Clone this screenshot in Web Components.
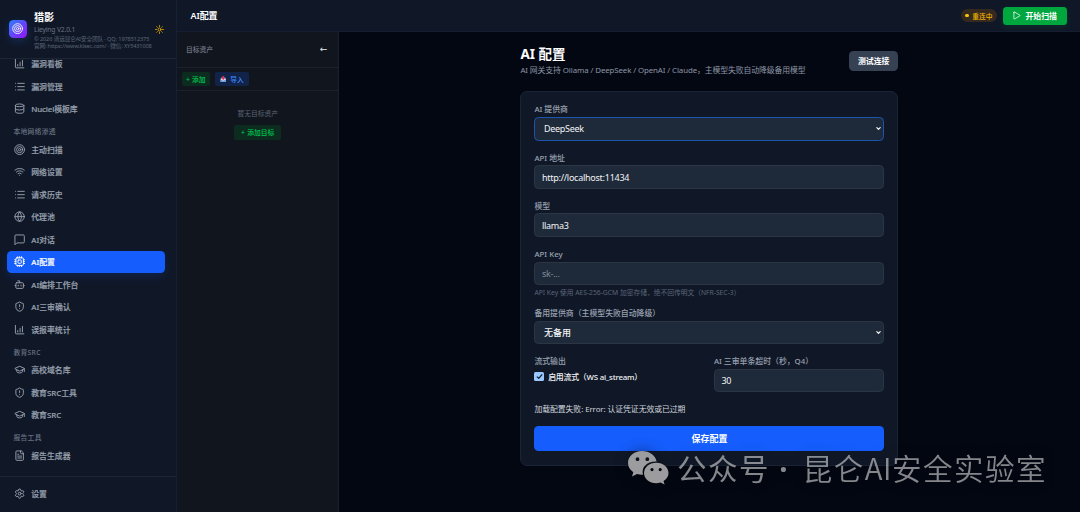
<!DOCTYPE html>
<html lang="zh-CN">
<head>
<meta charset="utf-8">
<title>猎影 - AI配置</title>
<style>
    html, body {
        margin: 0;
        height: 100%;
        overflow: hidden;
        background: #030712;
    }
    body {
        font-family: "Noto Sans", "Noto Sans CJK SC", sans-serif;
        font-size: 7.875px;
        color: #f3f4f6;
    }
</style>
</head>
<body>
<scan-app></scan-app>

<script>
const ICONS = {
    chart: '<path d="M3 3v16a2 2 0 0 0 2 2h16"/><path d="M8 17v-3M13 17V9M18 17V5"/>',
    list: '<path d="M3 5h.01M3 12h.01M3 19h.01M8 5h14M8 12h14M8 19h14"/>',
    database: '<ellipse cx="12" cy="5" rx="9" ry="3"/><path d="M3 5v14a9 3 0 0 0 18 0V5"/><path d="M3 12a9 3 0 0 0 18 0"/>',
    target: '<circle cx="12" cy="12" r="10.5"/><circle cx="12" cy="12" r="6.5"/><circle cx="12" cy="12" r="2.5"/>',
    wifi: '<path d="M12 20h.01M2 8.8a15 15 0 0 1 20 0M5 12.9a10 10 0 0 1 14 0M8.500 16.400a5 5 0 0 1 7 0"/>',
    globe: '<circle cx="12" cy="12" r="10"/><path d="M12 2a14.500 14.500 0 0 0 0 20 14.500 14.500 0 0 0 0-20M2 12h20"/>',
    chat: '<path d="M22 17a2 2 0 0 1-2 2H6l-4 4V4a2 2 0 0 1 2-2h16a2 2 0 0 1 2 2z"/>',
    cpu: '<rect x="4" y="4" width="16" height="16" rx="2"/><rect x="8.500" y="8.500" width="7" height="7" rx="1"/><path d="M8 1.500V4M12 1.500V4M16 1.500V4M8 20v2.500M12 20v2.500M16 20v2.500M1.500 8H4M1.500 12H4M1.500 16H4M20 8h2.500M20 12h2.500M20 16h2.500"/>',
    bot: '<path d="M12 8V4H8"/><rect x="4" y="8" width="16" height="12" rx="2"/><path d="M2 14h2M20 14h2M15 13v2M9 13v2"/>',
    shield: '<path d="M20 13c0 5-3.500 7.500-7.660 8.950a1 1 0 0 1-.67-.01C7.500 20.500 4 18 4 13V6a1 1 0 0 1 1-1c2 0 4.500-1.200 6.240-2.720a1.170 1.170 0 0 1 1.520 0C14.510 3.810 17 5 19 5a1 1 0 0 1 1 1z"/><path d="M12 8v4M12 16h.01"/>',
    school: '<path d="M21.420 10.920a1 1 0 0 0-.02-1.840L12.830 5.180a2 2 0 0 0-1.660 0l-8.570 3.900a1 1 0 0 0 0 1.830l8.570 3.910a2 2 0 0 0 1.660 0zM22 10v6"/><path d="M6 12.500V16a6 3 0 0 0 12 0v-3.500"/>',
    file: '<path d="M15 2H6a2 2 0 0 0-2 2v16a2 2 0 0 0 2 2h12a2 2 0 0 0 2-2V7z"/><path d="M14 2v4a2 2 0 0 0 2 2h4M10 9H8M16 13H8M16 17H8"/>',
    gear: '<path d="M9.670 4.140a2.340 2.340 0 0 1 4.660 0 2.340 2.340 0 0 0 3.320 1.910 2.340 2.340 0 0 1 2.330 4.030 2.340 2.340 0 0 0 0 3.840 2.340 2.340 0 0 1-2.330 4.030 2.340 2.340 0 0 0-3.320 1.910 2.340 2.340 0 0 1-4.660 0 2.340 2.340 0 0 0-3.320-1.910 2.340 2.340 0 0 1-2.330-4.030 2.340 2.340 0 0 0 0-3.840 2.340 2.340 0 0 1 2.330-4.030 2.340 2.340 0 0 0 3.320-1.910"/><circle cx="12" cy="12" r="3"/>',
    sun: '<circle cx="12" cy="12" r="4"/><path d="M12 1.500v2.500M12 20v2.500M4.600 4.600l1.700 1.700M17.700 17.700l1.700 1.700M1.500 12H4M20 12h2.500M6.300 17.700l-1.700 1.700M19.400 4.600l-1.700 1.700"/>',
    play: '<path d="M5 3.500v17a1 1 0 0 0 1.500.9l14.500-8.500a1 1 0 0 0 0-1.700L6.500 2.600A1 1 0 0 0 5 3.500z"/>',
    down: '<path d="M4 8l8 8 8-8"/>',
    check: '<path d="M4 13l5.500 5.500L20 6"/>',
    inbox: '<g stroke="none"><path d="M2 9h20v13H2z" fill="#a9c7ea"/><path d="M5 6h14v8H5z" fill="#e8eef7"/><path d="M2 16h6l2 2h4l2-2h6v6H2z" fill="#6f9bd1"/><path d="M9 0h6v7h4.500L12 15 4.500 7H9z" fill="#dc2f52"/></g>'
};

class ScanIcon extends HTMLElement {
    constructor() {
        super();
        this.attachShadow({ mode: 'open' });
    }

    connectedCallback() {
        const name = this.getAttribute('name');
        this.shadowRoot.innerHTML = `
        <style>
            :host { display: block; flex: none; width: 11.25px; height: 11.25px; }
            svg { display: block; width: 100%; height: 100%; overflow: visible; }
        </style>
        <svg viewBox="0 0 24 24" fill="none" stroke="currentColor" stroke-linecap="round" stroke-linejoin="round"
            stroke-width="${this.getAttribute('stroke') || 2}">${ICONS[name]}</svg>`;
    }
}
customElements.define('scan-icon', ScanIcon);

class NavItem extends HTMLElement {
    constructor() {
        super();
        this.attachShadow({ mode: 'open' });
    }

    connectedCallback() {
        this.shadowRoot.innerHTML = `
        <style>
            :host {
                display: flex;
                align-items: center;
                gap: 6.4px;
                box-sizing: border-box;
                height: 22.5px;
                padding: 0 6.6px;
                border-radius: 4.5px;
                color: #99a1af;
                font-weight: 500;
                white-space: nowrap;
                -webkit-text-stroke: .15px;
            }
            :host([tight]) { letter-spacing: -.12px; }
            :host([active]) {
                background: #155dfc;
                color: #fff;
                box-shadow: 0 4px 8px rgba(21, 93, 252, .14);
            }
        </style>
        <scan-icon name="${this.getAttribute('icon')}"></scan-icon>
        <span><slot></slot></span>`;
    }
}
customElements.define('nav-item', NavItem);

class NavSection extends HTMLElement {
    constructor() {
        super();
        this.attachShadow({ mode: 'open' }).innerHTML = `
        <style>
            :host {
                display: block;
                box-sizing: border-box;
                height: 18px;
                padding: 6px 6.4px 0;
                font-size: 6.75px;
                line-height: 11px;
                letter-spacing: .34px;
                font-weight: 500;
                color: #6a7282;
            }
        </style>
        <slot></slot>`;
    }
}
customElements.define('nav-section', NavSection);

class AppSidebar extends HTMLElement {
    constructor() {
        super();
        this.attachShadow({ mode: 'open' }).innerHTML = `
        <style>
            :host {
                display: flex;
                flex-direction: column;
                box-sizing: border-box;
                height: 100%;
                background: #101828;
                border-right: 1px solid #162032;
            }
            header {
                display: flex;
                align-items: center;
                box-sizing: border-box;
                flex: none;
                height: 59px;
                padding: 0 12.5px 0 9px;
                border-bottom: 1px solid #1a2536;
            }
            .logo {
                display: grid;
                place-items: center;
                flex: none;
                width: 18px;
                height: 18px;
                margin-right: 7px;
                border-radius: 4.5px;
                background: linear-gradient(135deg, #2b7fff, #9810fa);
                box-shadow: 0 3px 8px rgba(43, 127, 255, .2);
            }
            .brand { flex: 1; padding-top: 3.8px; white-space: nowrap; }
            .name { font-size: 10.1px; line-height: 13px; font-weight: 700; color: #fff; }
            .version { font-size: 6.75px; line-height: 12px; color: #6a7282; letter-spacing: -.16px; }
            .legal { font-size: 5.6px; line-height: 7.3px; letter-spacing: -.1px; color: #5c6677; }
            .legal + .legal { letter-spacing: -.13px; }
            .sun { width: 9px; height: 9px; color: #f0b100; }
            nav { flex: 1; overflow: hidden; padding: 0 11px 0 7px; }
            .list { margin-top: -6.45px; }
            footer { flex: none; height: 36.5px; box-sizing: border-box; padding: 6px 11px 0 7px; border-top: 1px solid #1a2536; }
        </style>
        <header>
            <div class="logo"><scan-icon name="target"></scan-icon></div>
            <div class="brand">
                <div class="name">猎影</div>
                <div class="version">Lieying V2.0.1</div>
                <div class="legal">© 2026 清远昆仑AI安全团队 · QQ: 1978512375</div>
                <div class="legal">官网: https://www.klsec.com/ · 微信: XY5431008</div>
            </div>
            <scan-icon class="sun" name="sun" stroke="2.2"></scan-icon>
        </header>
        <nav>
            <div class="list">
                <nav-item icon="chart">漏洞看板</nav-item>
                <nav-item icon="list">漏洞管理</nav-item>
                <nav-item icon="database" tight>Nuclei模板库</nav-item>
                <nav-section>本地网络渗透</nav-section>
                <nav-item icon="target">主动扫描</nav-item>
                <nav-item icon="wifi">网络设置</nav-item>
                <nav-item icon="list">请求历史</nav-item>
                <nav-item icon="globe">代理池</nav-item>
                <nav-item icon="chat">AI对话</nav-item>
                <nav-item icon="cpu" active>AI配置</nav-item>
                <nav-item icon="bot">AI编排工作台</nav-item>
                <nav-item icon="shield">AI三审确认</nav-item>
                <nav-item icon="chart">误报率统计</nav-item>
                <nav-section>教育SRC</nav-section>
                <nav-item icon="school">高校域名库</nav-item>
                <nav-item icon="shield">教育SRC工具</nav-item>
                <nav-item icon="school">教育SRC</nav-item>
                <nav-section>报告工具</nav-section>
                <nav-item icon="file">报告生成器</nav-item>
            </div>
        </nav>
        <footer><nav-item icon="gear">设置</nav-item></footer>`;
    }
}
customElements.define('app-sidebar', AppSidebar);

class AppTopbar extends HTMLElement {
    constructor() {
        super();
        this.attachShadow({ mode: 'open' }).innerHTML = `
        <style>
            :host {
                display: flex;
                align-items: center;
                box-sizing: border-box;
                height: 32px;
                padding: 0 13.5px;
                background: #101828;
                border-bottom: 1px solid #141e30;
                white-space: nowrap;
            }
            h1 { flex: 1; margin: 0; font-size: 9px; font-weight: 600; letter-spacing: -.12px; color: #fff; }
            .status {
                display: flex;
                align-items: center;
                gap: 3.5px;
                height: 13.5px;
                margin-right: 6px;
                padding: 0 4.5px;
                border-radius: 7px;
                background: #35291f;
                color: #f0b100;
                font-size: 6.75px;
                font-weight: 500;
            }
            .status i { width: 3.6px; height: 3.6px; border-radius: 50%; background: #fdc700; }
            .start {
                display: flex;
                align-items: center;
                gap: 4.5px;
                box-sizing: border-box;
                width: 63.500px;
                height: 18px;
                padding: 0 9px;
                border-radius: 3.5px;
                background: #00a63e;
                box-shadow: 0 2px 6px rgba(0, 166, 62, .15);
                font-size: 7.875px;
                font-weight: 600;
                color: #fff;
            }
            .start scan-icon { width: 9px; height: 9px; }
        </style>
        <h1>AI配置</h1>
        <div class="status"><i></i><span>重连中</span></div>
        <div class="start"><scan-icon name="play"></scan-icon><span>开始扫描</span></div>`;
    }
}
customElements.define('app-topbar', AppTopbar);

class TargetPanel extends HTMLElement {
    constructor() {
        super();
        this.attachShadow({ mode: 'open' }).innerHTML = `
        <style>
            :host {
                display: block;
                box-sizing: border-box;
                background: #11151d;
                border-right: 1px solid #1b212b;
                font-size: 6.75px;
                white-space: nowrap;
            }
            .head {
                display: flex;
                align-items: center;
                justify-content: space-between;
                box-sizing: border-box;
                height: 36px;
                padding: 0 11px 0 9px;
                border-bottom: 1px solid #1c222c;
                color: #737b8a;
                font-weight: 500;
            }
            .head b { font: 400 9px "DejaVu Sans", sans-serif; color: #e5e7eb; }
            .tools {
                display: flex;
                align-items: center;
                gap: 5px;
                box-sizing: border-box;
                height: 23px;
                padding: 0 4.5px;
                border-bottom: 1px solid #1c222c;
            }
            .btn {
                display: flex;
                align-items: center;
                justify-content: center;
                gap: 3.5px;
                width: 28.500px;
                height: 13.500px;
                border-radius: 2px;
                background: #0d2c20;
                color: #00c950;
                font-weight: 500;
                word-spacing: .6px;
            }
            .import { width: 34px; background: #12234a; color: #3b8cff; }
            .import scan-icon { width: 6.5px; height: 6.5px; }
            .empty { display: flex; flex-direction: column; align-items: center; padding-top: 17.3px; color: #5d6675; }
            .empty p { margin: 0 0 5.500px; line-height: 11px; }
            .add { width: 47px; height: 15.500px; }
        </style>
        <div class="head"><span>目标资产</span><b>←</b></div>
        <div class="tools">
            <div class="btn">+ 添加</div>
            <div class="btn import"><scan-icon name="inbox"></scan-icon><span>导入</span></div>
        </div>
        <div class="empty">
            <p>暂无目标资产</p>
            <div class="btn add">+ 添加目标</div>
        </div>`;
    }
}
customElements.define('target-panel', TargetPanel);

class FormField extends HTMLElement {
    constructor() {
        super();
        this.attachShadow({ mode: 'open' });
    }

    connectedCallback() {
        const hint = this.getAttribute('hint');
        const isSelect = this.hasAttribute('select');
        this.shadowRoot.innerHTML = `
        <style>
            :host { display: block; white-space: nowrap; }
            label { display: block; height: 12.8px; line-height: 10.6px; font-size: 7.875px; font-weight: 500; color: #99a1af; }
            .box {
                display: flex;
                align-items: center;
                justify-content: space-between;
                box-sizing: border-box;
                height: 23.6px;
                padding: 0 2px 0 6.5px;
                border: 1px solid #2a3644;
                border-radius: 4.5px;
                background: #1e2939;
                font-size: 9px;
                letter-spacing: -.25px;
                color: #f3f4f6;
            }
            :host([select]) .box { padding-left: 8.6px; letter-spacing: 0; font-weight: 500; }
            :host([focused]) .box { border-color: #1c55ae; letter-spacing: -.3px; font-weight: 400; }
            :host([empty]) .box { color: #808b9b; }
            .box scan-icon { width: 5px; height: 5px; }
            .hint { height: 10.8px; line-height: 15px; font-size: 6.75px; color: #5b6576; }
        </style>
        <label>${this.getAttribute('label')}</label>
        <div class="box"><span><slot></slot></span>${isSelect ? '<scan-icon name="down" stroke="6"></scan-icon>' : ''}</div>
        ${hint ? `<div class="hint">${hint}</div>` : ''}`;
    }
}
customElements.define('form-field', FormField);

class StreamToggle extends HTMLElement {
    constructor() {
        super();
        this.attachShadow({ mode: 'open' }).innerHTML = `
        <style>
            :host { display: block; white-space: nowrap; }
            .title { height: 12.8px; line-height: 10.6px; font-size: 7.875px; font-weight: 500; color: #99a1af; }
            .row { display: flex; align-items: center; gap: 4.3px; height: 16px; font-size: 7.875px; letter-spacing: -.2px; font-weight: 500; }
            .box { display: grid; place-items: center; width: 9.500px; height: 9.500px; border-radius: 1.5px; background: #99c8ff; color: #15202f; }
            .box scan-icon { width: 7px; height: 7px; }
        </style>
        <div class="title">流式输出</div>
        <div class="row"><div class="box"><scan-icon name="check" stroke="4"></scan-icon></div><span><slot></slot></span></div>`;
    }
}
customElements.define('stream-toggle', StreamToggle);

class AiConfig extends HTMLElement {
    constructor() {
        super();
        this.attachShadow({ mode: 'open' }).innerHTML = `
        <style>
            :host { display: block; box-sizing: border-box; width: 378px; margin: 0 auto; padding-top: 15.2px; white-space: nowrap; }
            header { display: flex; justify-content: space-between; height: 43.5px; }
            h2 { margin: 0; font-size: 13.5px; line-height: 15.5px; font-weight: 700; color: #fff; }
            .sub { margin-top: 2.8px; font-size: 7.875px; line-height: 11px; letter-spacing: -.1px; color: #8d96a5; }
            .test {
                display: grid;
                place-items: center;
                width: 49.500px;
                height: 20.500px;
                margin-top: 3.5px;
                border-radius: 4.5px;
                background: #364153;
                font-size: 7.875px;
                font-weight: 600;
                color: #fff;
            }
            .card {
                display: flex;
                flex-direction: column;
                gap: 11.75px;
                box-sizing: border-box;
                height: 375px;
                padding: 12.8px 13px;
                border: 1px solid #1a2435;
                border-radius: 7px;
                background: #101828;
            }
            .cols { display: grid; grid-template-columns: 1fr 1fr; gap: 9px; }
            .error { line-height: 10.500px; font-size: 7.875px; letter-spacing: -.07px; color: #d1d5dc; }
            .save {
                display: grid;
                place-items: center;
                height: 24.500px;
                border-radius: 4.5px;
                background: #155dfc;
                font-size: 9px;
                font-weight: 600;
                color: #fff;
            }
        </style>
        <header>
            <div>
                <h2>AI 配置</h2>
                <div class="sub">AI 网关支持 Ollama / DeepSeek / OpenAI / Claude，主模型失败自动降级备用模型</div>
            </div>
            <div class="test">测试连接</div>
        </header>
        <div class="card">
            <form-field label="AI 提供商" select focused>DeepSeek</form-field>
            <form-field label="API 地址">http://localhost:11434</form-field>
            <form-field label="模型">llama3</form-field>
            <form-field label="API Key" empty hint="API Key 使用 AES-256-GCM 加密存储，绝不回传明文（NFR-SEC-3）">sk-...</form-field>
            <form-field label="备用提供商（主模型失败自动降级）" select>无备用</form-field>
            <div class="cols">
                <stream-toggle>启用流式（WS ai_stream）</stream-toggle>
                <form-field label="AI 三审单条超时（秒，Q4）">30</form-field>
            </div>
            <div class="error">加载配置失败: Error: 认证凭证无效或已过期</div>
            <div class="save">保存配置</div>
        </div>`;
    }
}
customElements.define('ai-config', AiConfig);

class AccountMark extends HTMLElement {
    constructor() {
        super();
        this.attachShadow({ mode: 'open' }).innerHTML = `
        <style>
            :host {
                position: absolute;
                left: 627px;
                top: 446.5px;
                display: flex;
                align-items: center;
                height: 42px;
                color: rgba(190, 190, 192, .7);
                filter: drop-shadow(0 0 7px rgba(0, 0, 0, .45));
                font-size: 29.5px;
                font-weight: 350;
                letter-spacing: 1.5px;
                line-height: 42px;
                white-space: pre;
            }
            svg { width: 42px; height: 36px; margin-right: 8px; opacity: .95; }
            b { font-weight: 400; }
            .dot { font-weight: 700; }
            .name { margin-left: 4.5px; }
            i { font: 350 29.5px "Noto Sans CJK SC", sans-serif; letter-spacing: .6px; }
        </style>
        <svg viewBox="0 0 42 36">
            <path fill="#a5a5a7" fill-rule="evenodd" d="M15 1C7 1 1 6.300 1 13c0 3.800 2 7 5.300 9.200L5 26.500l5-2.500c1.700.5 3.500.8 5 .8h1C14 17 20 11 29.600 11.400 28.500 5.500 22.500 1 15 1zM10.500 7.300a1.900 1.900 0 1 1 0 3.800 1.900 1.900 0 0 1 0-3.800zm9.800 0a1.900 1.900 0 1 1 0 3.800 1.900 1.900 0 0 1 0-3.800z"/>
            <path fill="#a5a5a7" fill-rule="evenodd" d="M29.300 12.800c-7 0-12.300 4.500-12.300 10.200s5.300 10.200 12.300 10.200c1.500 0 2.900-.2 4.200-.6l4.100 2-1.100-3.500c3.100-1.900 5-4.800 5-8.100 0-5.700-5.300-10.200-12.200-10.200zM25 18a1.600 1.600 0 1 1 0 3.200 1.600 1.600 0 0 1 0-3.200zm8.200 0a1.600 1.600 0 1 1 0 3.200 1.600 1.600 0 0 1 0-3.200z"/>
        </svg>
        <span><b>公众号</b> <span class="dot">·</span> <span class="name">昆仑<i>AI</i>安全实验室</span></span>`;
    }
}
customElements.define('account-mark', AccountMark);

class ScanApp extends HTMLElement {
    constructor() {
        super();
        this.attachShadow({ mode: 'open' }).innerHTML = `
        <style>
            :host { display: grid; grid-template-columns: 177px 1fr; height: 100vh; }
            app-sidebar { height: 100vh; }
            .right { display: grid; grid-template-rows: 31.9px 1fr; min-width: 0; }
            .work { display: grid; grid-template-columns: 162.4px 1fr; min-height: 0; }
            main { padding-right: .6px; overflow: hidden; }
        </style>
        <app-sidebar></app-sidebar>
        <div class="right">
            <app-topbar></app-topbar>
            <div class="work">
                <target-panel></target-panel>
                <main><ai-config></ai-config></main>
            </div>
        </div>
        <account-mark></account-mark>`;
    }
}
customElements.define('scan-app', ScanApp);
</script>
</body>
</html>
